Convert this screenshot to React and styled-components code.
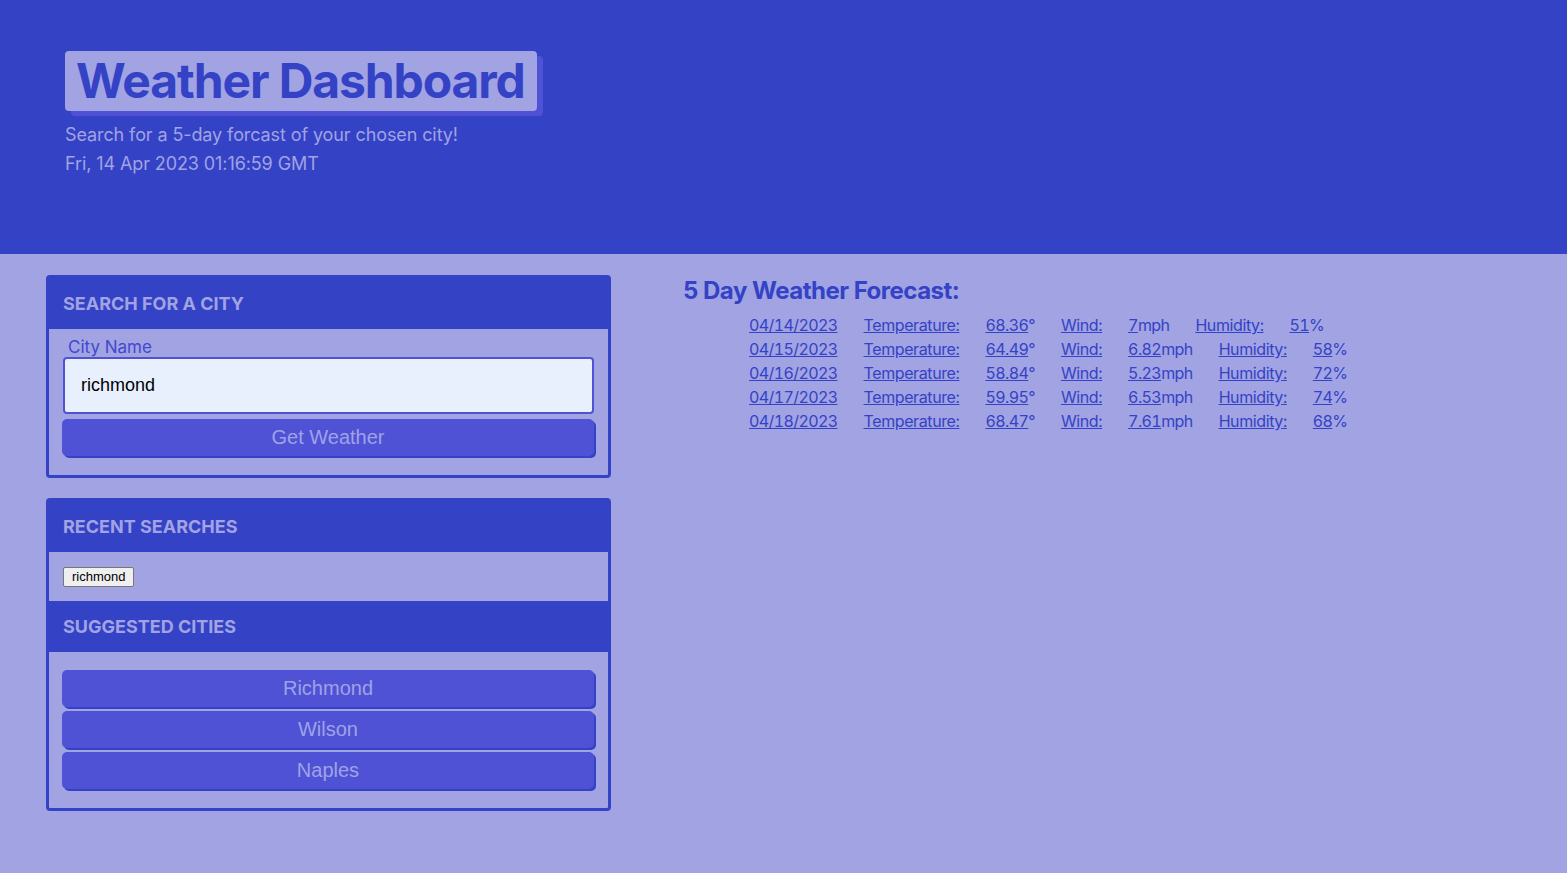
import styled, { createGlobalStyle } from "styled-components";

const GlobalStyle = createGlobalStyle`
  body {
    margin: 0;
    background: #a1a3e3;
    font-family: Inter, Roboto, sans-serif;
  }
`;

const Header = styled.header`
  height: 254px;
  box-sizing: border-box;
  background: #3442c6;
  padding: 51px 65px 0;
`;

const Title = styled.h1`
  display: inline-block;
  margin: 0;
  padding: 0 12px 0 11px;
  height: 60px;
  line-height: 60px;
  font-size: 48px;
  font-weight: 700;
  letter-spacing: -1.1px;
  color: #3442c6;
  background: #a1a3e3;
  border-radius: 4px;
  box-shadow: 6px 5px 0 #4f52d4;
`;

const Sub = styled.p`
  margin: ${(props) => (props.first ? "12px" : "5px")} 0 0;
  font-size: 18px;
  line-height: 24px;
  letter-spacing: -0.1px;
  color: #a1a3e3;
`;

const Main = styled.main`
  display: flex;
  align-items: flex-start;
  padding: 21px 46px;
`;

const Side = styled.aside`
  width: 565px;
  display: flex;
  flex-direction: column;
  gap: 20px;
`;

const Card = styled.section`
  border: 3px solid #3442c6;
  border-radius: 4px;
  background: #a1a3e3;
`;

const CardHead = styled.h2`
  margin: 0;
  height: 51px;
  display: flex;
  align-items: center;
  padding: 0 14px;
  background: #3442c6;
  color: #a1a3e3;
  font-size: 18px;
  font-weight: 700;
  text-transform: uppercase;
`;

const CardBody = styled.div`
  padding: ${(props) => props.pad || "9px 14px 17px"};
  display: flex;
  flex-direction: column;
  align-items: stretch;
  gap: ${(props) => props.gap || 0}px;
`;

const Label = styled.label`
  padding-left: 5px;
  font-size: 17px;
  line-height: 19px;
  color: #4249cc;
`;

const Input = styled.input`
  box-sizing: border-box;
  height: 57px;
  padding: 0 16px;
  border: 2px solid #4f52d4;
  border-radius: 4px;
  background: #e8f0fe;
  font-family: "Liberation Sans", Arial, sans-serif;
  font-size: 18px;
  color: #000;
  outline: none;
`;

const Button = styled.button`
  height: 37px;
  margin: ${(props) => (props.top ? "5px" : "0")} 0 2px -1px;
  border: none;
  border-radius: 5px;
  background: #4f52d4;
  box-shadow: 2px 2px 0 #3442c6;
  font-family: "Liberation Sans", Arial, sans-serif;
  font-size: 20px;
  color: #9fa2e8;
  cursor: pointer;
`;

const Recent = styled.div`
  height: 49px;
  display: flex;
  align-items: center;
  padding: 0 14px;
`;

const Chip = styled.button`
  height: 20px;
  padding: 0 8px;
  border: 1px solid #767676;
  border-radius: 2px;
  background: #efefef;
  font-family: "Liberation Sans", Arial, sans-serif;
  font-size: 13px;
  color: #000;
`;

const Forecast = styled.div`
  padding: 0 0 0 72px;
`;

const ForecastTitle = styled.h2`
  margin: 0;
  padding-top: 1px;
  font-size: 24px;
  line-height: 30px;
  font-weight: 700;
  letter-spacing: -0.5px;
  color: #3442c6;
`;

const Rows = styled.ul`
  list-style: none;
  margin: 7px 0 0;
  padding: 0 0 0 66px;
`;

const Row = styled.li`
  display: flex;
  gap: 26px;
  font-size: 16px;
  line-height: 24px;
  letter-spacing: -0.6px;
  font-variant-numeric: tabular-nums;
  color: #3442c6;
`;

const Link = styled.a`
  color: #3442c6;
  text-decoration: underline;
  letter-spacing: ${(props) => (props.label ? "-0.4px" : "inherit")};
`;

const days = [
  { date: "04/14/2023", temp: "68.36", wind: "7", hum: "51" },
  { date: "04/15/2023", temp: "64.49", wind: "6.82", hum: "58" },
  { date: "04/16/2023", temp: "58.84", wind: "5.23", hum: "72" },
  { date: "04/17/2023", temp: "59.95", wind: "6.53", hum: "74" },
  { date: "04/18/2023", temp: "68.47", wind: "7.61", hum: "68" },
];

export default function App() {
  return (
    <>
      <GlobalStyle />
      <Header>
        <Title>Weather Dashboard</Title>
        <Sub first>Search for a 5-day forcast of your chosen city!</Sub>
        <Sub>Fri, 14 Apr 2023 01:16:59 GMT</Sub>
      </Header>
      <Main>
        <Side>
          <Card>
            <CardHead>Search for a City</CardHead>
            <CardBody>
              <Label htmlFor="city">City Name</Label>
              <Input id="city" defaultValue="richmond" />
              <Button top>Get Weather</Button>
            </CardBody>
          </Card>
          <Card>
            <CardHead>Recent Searches</CardHead>
            <Recent>
              <Chip>richmond</Chip>
            </Recent>
            <CardHead>Suggested Cities</CardHead>
            <CardBody pad="18px 14px 17px" gap={2}>
              <Button>Richmond</Button>
              <Button>Wilson</Button>
              <Button>Naples</Button>
            </CardBody>
          </Card>
        </Side>
        <Forecast>
          <ForecastTitle>5 Day Weather Forecast:</ForecastTitle>
          <Rows>
            {days.map((d) => (
              <Row key={d.date}>
                <Link>{d.date}</Link>
                <Link label>Temperature:</Link>
                <span>
                  <Link>{d.temp}</Link>°
                </span>
                <Link label>Wind:</Link>
                <span>
                  <Link>{d.wind}</Link>mph
                </span>
                <Link label>Humidity:</Link>
                <span>
                  <Link>{d.hum}</Link>%
                </span>
              </Row>
            ))}
          </Rows>
        </Forecast>
      </Main>
    </>
  );
}
